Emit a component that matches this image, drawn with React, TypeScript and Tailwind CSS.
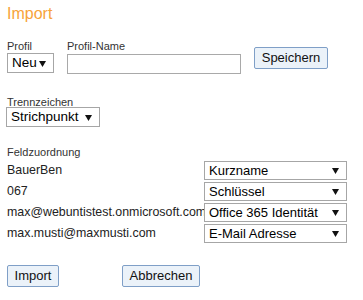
import React from "react";

function Sel({ text, w, h = 19, fs = 13 }: { text: string; w: number; h?: number; fs?: number }) {
  return (
    <div
      className="flex items-center justify-between border border-[#a6a6a6] bg-white pl-[4px] pr-[7px] text-black"
      style={{ width: w, height: h, fontSize: fs }}
    >
      <span className="whitespace-nowrap leading-none">{text}</span>
      <svg width="7" height="7" viewBox="0 0 7 7" className="shrink-0">
        <polygon points="0,1 7,1 3.5,7" fill="#111" />
      </svg>
    </div>
  );
}

function Btn({ children, w }: { children: React.ReactNode; w: number }) {
  return (
    <div
      className="flex h-[22px] items-center justify-center rounded-[2px] border border-[#7f9fc7] bg-[#ebf2f9] text-[13px] text-[#111]"
      style={{ width: w }}
    >
      {children}
    </div>
  );
}

const rows: [string, string][] = [
  ["BauerBen", "Kurzname"],
  ["067", "Schlüssel"],
  ["max@webuntistest.onmicrosoft.com", "Office 365 Identität"],
  ["max.musti@maxmusti.com", "E-Mail Adresse"],
];

export default function App() {
  return (
    <div className="h-[300px] w-[363px] bg-white pl-[7px] font-['Liberation_Sans',Arial,sans-serif] text-[#222]">
      <div className="pt-[4px] text-[16px] leading-[20px] text-[#f7a33a]">Import</div>
      <div className="mt-[16px] flex items-start">
        <div className="w-[60px]">
          <div className="text-[11px] leading-[12px] text-[#333]">Profil</div>
          <div className="mt-[1px]">
            <Sel text="Neu" w={47} h={20} fs={13.5} />
          </div>
        </div>
        <div className="w-[187px]">
          <div className="text-[11px] leading-[12px] text-[#333]">Profil-Name</div>
          <div className="mt-[2px] h-[20px] w-[174px] border border-[#a9a9a9] bg-white" />
        </div>
        <div className="mt-[7px]">
          <Btn w={74}>Speichern</Btn>
        </div>
      </div>
      <div className="mt-[22px] text-[11px] leading-[12px] text-[#333]">Trennzeichen</div>
      <div className="ml-[-1px] mt-[-1px]">
        <Sel text="Strichpunkt" w={94} h={20} fs={13.5} />
      </div>
      <div className="mt-[19px] text-[11px] leading-[12px] text-[#333]">Feldzuordnung</div>
      <div className="mt-[3px] flex flex-col gap-[2px]">
        {rows.map(([l, r]) => (
          <div key={l} className="flex h-[19px] items-center">
            <div className="w-[197px] whitespace-nowrap text-[12.4px] leading-none">{l}</div>
            <Sel text={r} w={143} h={19} fs={13} />
          </div>
        ))}
      </div>
      <div className="mt-[22px] flex">
        <Btn w={52}>Import</Btn>
        <div className="ml-[63px]">
          <Btn w={78}>Abbrechen</Btn>
        </div>
      </div>
    </div>
  );
}
